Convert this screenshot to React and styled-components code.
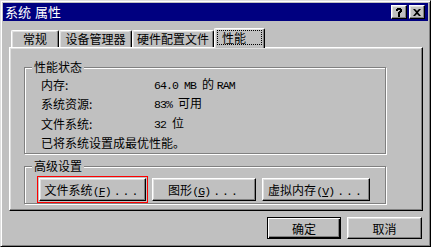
import React from 'react'
import styled, { createGlobalStyle } from 'styled-components'

const GlobalStyle = createGlobalStyle`
  html, body {
    margin: 0;
    padding: 0;
    background: #c0c0c0;
  }
  * {
    box-sizing: border-box;
  }
`

const cjk = `"Noto Sans CJK SC", "Noto Sans", sans-serif`
const mono = `"Liberation Mono", "Noto Sans CJK SC", monospace`

const Window = styled.div`
  width: 431px;
  height: 247px;
  display: flex;
  flex-direction: column;
  padding: 2px;
  background: #c0c0c0;
  border: 1px solid;
  border-color: #dfdfdf #000 #000 #dfdfdf;
  box-shadow: inset 1px 1px #fff, inset -1px -1px #808080;
  font-family: ${cjk};
  font-size: 12px;
  color: #000;
`

const TitleBar = styled.div`
  height: 18px;
  display: flex;
  align-items: center;
  justify-content: space-between;
  padding: 0 3px 0 2px;
  background: #000080;
  color: #fff;
`

const TitleText = styled.span`
  font-size: 13px;
  line-height: 18px;
  word-spacing: 1px;
`

const TitleButtons = styled.div`
  display: flex;
  gap: 2px;
`

const TitleButton = styled.div`
  width: 16px;
  height: 14px;
  display: flex;
  align-items: center;
  justify-content: center;
  background: #c0c0c0;
  border: 1px solid;
  border-color: #fff #000 #000 #fff;
  box-shadow: inset -1px -1px #808080, inset 1px 1px #dfdfdf;
  color: #000;
`

const Body = styled.div`
  flex: 1;
  display: flex;
  flex-direction: column;
  padding: 7px 5px 0 6px;
`

const TabRow = styled.div`
  display: flex;
  align-items: flex-end;
  padding-left: 2px;
  height: 20px;
  position: relative;
  z-index: 1;
  margin-bottom: -1px;
`

const Tab = styled.div`
  width: ${p => p.$w}px;
  height: ${p => (p.$active ? 20 : 17)}px;
  margin-bottom: ${p => (p.$active ? 0 : 1)}px;
  display: flex;
  align-items: center;
  justify-content: center;
  padding-bottom: ${p => (p.$active ? 2 : 0)}px;
  background: #c0c0c0;
  border-top: 1px solid #fff;
  border-left: 1px solid #fff;
  border-right: 1px solid #000;
  border-top-left-radius: 2px;
  border-top-right-radius: 2px;
  box-shadow: inset -1px 0 #808080, inset 1px 1px #dfdfdf;
  line-height: 14px;
`

const Focus = styled.span`
  width: 45px;
  height: 15px;
  display: flex;
  align-items: center;
  padding-left: 4px;
  border: 1px dotted #000;
`

const Panel = styled.div`
  height: 164px;
  display: flex;
  flex-direction: column;
  gap: 12px;
  padding: 19px 0 0 14px;
  border: 1px solid;
  border-color: #fff #000 #000 #fff;
  box-shadow: inset -1px -1px #808080, inset 1px 1px #dfdfdf;
`

const Group = styled.div`
  position: relative;
  width: 362px;
  height: ${p => p.$h}px;
  padding: ${p => p.$pad};
  border: 1px solid #808080;
  box-shadow: inset 1px 1px #fff, 1px 1px #fff;
`

const Legend = styled.span`
  position: absolute;
  top: -9px;
  left: 7px;
  padding: 0 2px;
  background: #c0c0c0;
  line-height: 16px;
`

const Stats = styled.div`
  display: grid;
  grid-template-columns: 113px auto;
  grid-auto-rows: 19.5px;
  align-items: center;
`

const Label = styled.span`
  line-height: 14px;
`

const Value = styled.span`
  line-height: 14px;
  white-space: pre;
`

const Latin = styled.span`
  font-family: ${mono};
  font-size: 11.5px;
  letter-spacing: -0.9px;
`

const Note = styled.span`
  grid-column: 1 / 3;
  line-height: 14px;
`

const ButtonRow = styled.div`
  display: flex;
  gap: 6px;
`

const Button = styled.button`
  width: ${p => p.$w}px;
  height: ${p => p.$h || 23}px;
  padding: 0;
  background: #c0c0c0;
  font-family: ${cjk};
  font-size: 12px;
  color: #000;
  border: 1px solid;
  border-color: #fff #000 #000 #fff;
  box-shadow: inset -1px -1px #808080, inset 1px 1px #dfdfdf;
  outline: ${p => (p.$marked ? '1px solid #f00' : 'none')};
  outline-offset: 1px;
  white-space: pre;
`

const DefaultButton = styled(Button)`
  border: 1px solid #000;
  box-shadow: inset 1px 1px #fff, inset -1px -1px #000, inset -2px -2px #808080;
`

const Footer = styled.div`
  display: flex;
  justify-content: flex-end;
  gap: 6px;
  padding: 6px 1px 0 0;
`

const Dots = styled.span`
  margin-left: 3px;
  letter-spacing: 2px;
`

const Key = ({ k }) => (
  <Latin>
    (<u>{k}</u>)<Dots>...</Dots>
  </Latin>
)

const tabs = [
  { label: '常规', w: 48 },
  { label: '设备管理器', w: 73 },
  { label: '硬件配置文件', w: 82 },
  { label: '性能', w: 51, active: true },
]

const App = () => {
  return (
    <Window>
      <GlobalStyle />
      <TitleBar>
        <TitleText>系统 属性</TitleText>
        <TitleButtons>
          <TitleButton>
            <svg width="8" height="9" viewBox="0 0 8 9">
              <path d="M1 1h1V0h4v1h1v3H6v1H5v2H3V4h1V3h1V2H3v1H1z" fill="#000" />
              <rect x="3" y="7" width="2" height="2" fill="#000" />
            </svg>
          </TitleButton>
          <TitleButton>
            <svg width="8" height="7" viewBox="0 0 8 7">
              <path d="M0 0h2l2 2 2-2h2L5 3.5 8 7H6L4 5 2 7H0l3-3.5z" fill="#000" />
            </svg>
          </TitleButton>
        </TitleButtons>
      </TitleBar>

      <Body>
        <TabRow>
          {tabs.map(t => (
            <Tab key={t.label} $w={t.w} $active={t.active}>
              {t.active ? <Focus>{t.label}</Focus> : t.label}
            </Tab>
          ))}
        </TabRow>

        <Panel>
          <Group $h={87} $pad="7px 0 0 16px">
            <Legend>性能状态</Legend>
            <Stats>
              <Label>内存:</Label>
              <Value>
                <Latin>64.0 MB </Latin>的 <Latin>RAM</Latin>
              </Value>
              <Label>系统资源:</Label>
              <Value>
                <Latin>83% </Latin>可用
              </Value>
              <Label>文件系统:</Label>
              <Value>
                <Latin>32 </Latin>位
              </Value>
              <Note>已将系统设置成最优性能。</Note>
            </Stats>
          </Group>

          <Group $h={38} $pad="11px 0 0 14px">
            <Legend>高级设置</Legend>
            <ButtonRow>
              <Button $w={107} $marked>
                文件系统<Key k="F" />
              </Button>
              <Button $w={104}>
                图形<Key k="G" />
              </Button>
              <Button $w={108}>
                虚拟内存<Key k="V" />
              </Button>
            </ButtonRow>
          </Group>
        </Panel>

        <Footer>
          <DefaultButton $w={74} $h={22}>确定</DefaultButton>
          <Button $w={75} $h={22}>取消</Button>
        </Footer>
      </Body>
    </Window>
  )
}

export default App
